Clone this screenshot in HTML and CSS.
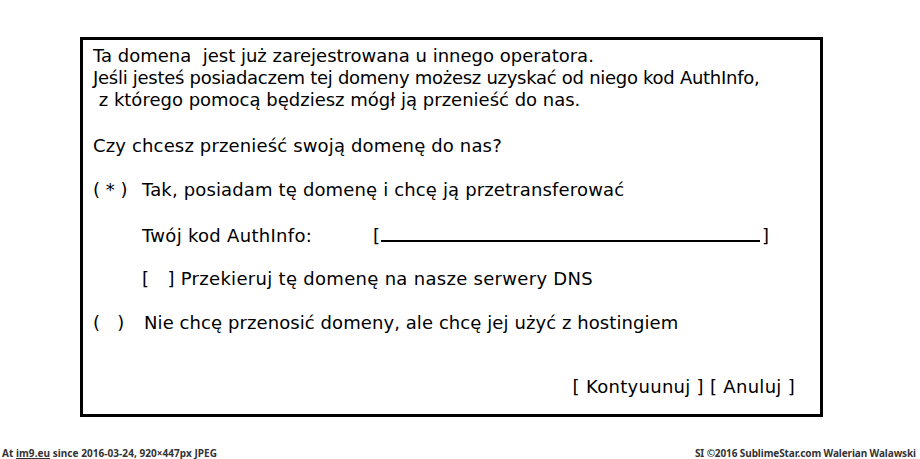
FILE: index.html
```html
<!DOCTYPE html>
<html lang="pl">
<head>
<meta charset="utf-8">
<title>Transfer domeny</title>
<link rel="stylesheet" href="styles.css">
</head>
<body>
<div class="page">
  <div class="dialog">
    <p class="intro">Ta domena&nbsp; jest już zarejestrowana u innego operatora.<br><span class="tight">Jeśli jesteś posiadaczem tej domeny możesz uzyskać od niego kod AuthInfo,</span><br>&nbsp;z którego pomocą będziesz mógł ją przenieść do nas.</p>
    <p class="question">Czy chcesz przenieść swoją domenę do nas?</p>
    <div class="row radio-row first">
      <span class="mark">( * )</span>
      <span class="label label-1">Tak, posiadam tę domenę i chcę ją przetransferować</span>
    </div>
    <div class="row sub-row code-row">
      <span class="code-label">Twój kod AuthInfo:</span>
      <span class="field">[<span class="field-line"></span>]</span>
    </div>
    <div class="row sub-row check-row">
      <span>[&nbsp;&nbsp;&nbsp;] Przekieruj tę domenę na nasze serwery DNS</span>
    </div>
    <div class="row radio-row second">
      <span class="mark">(&nbsp;&nbsp;&nbsp;)</span>
      <span class="label label-2">Nie chcę przenosić domeny, ale chcę jej użyć z hostingiem</span>
    </div>
    <div class="actions">[ Kontyuunuj ] [ Anuluj ]</div>
  </div>
</div>
<div class="footer">
  <span class="foot-left">At <span class="link">im9.eu</span> since 2016-03-24, 920×447px JPEG</span>
  <span class="foot-right">SI ©2016 SublimeStar.com Walerian Walawski</span>
</div>
</body>
</html>
```

FILE: styles.css
```css
html, body {
  margin: 0;
  padding: 0;
  background: #fff;
}
.page {
  height: 447px;
  padding-top: 37px;
  padding-left: 80px;
  box-sizing: border-box;
}
.dialog {
  box-sizing: border-box;
  width: 743px;
  height: 380px;
  border: 3px solid #000;
  padding: 5px 25px 0 10px;
  font-family: "DejaVu Sans", Verdana, sans-serif;
  font-size: 18px;
  line-height: 22px;
  color: #000;
  display: flex;
  flex-direction: column;
}
.intro {
  margin: 0;
}
.tight {
  letter-spacing: -0.28px;
}
.question {
  margin: 24px 0 0 0;
  letter-spacing: 0.15px;
}
.row {
  display: flex;
  align-items: baseline;
  white-space: nowrap;
}
.first {
  margin-top: 22px;
}
.mark {
  width: 49px;
  flex: none;
}
.label-1 {
  letter-spacing: 0.15px;
}
.label-2 {
  margin-left: 2px;
  letter-spacing: 0.08px;
}
.sub-row {
  padding-left: 49px;
}
.code-row {
  margin-top: 24px;
}
.code-label {
  width: 231px;
  flex: none;
  letter-spacing: 0.3px;
}
.field {
  display: inline-flex;
  align-items: baseline;
}
.field-line {
  display: inline-block;
  width: 379px;
  height: 2px;
  border-bottom: 2px solid #000;
  margin: 0 2px 0 1px;
}
.check-row {
  margin-top: 21px;
  letter-spacing: 0.3px;
}
.second {
  margin-top: 22px;
}
.actions {
  margin-top: 42px;
  text-align: right;
  letter-spacing: 0.3px;
}
.footer {
  height: 12px;
  display: flex;
  justify-content: space-between;
  padding: 0 4px 0 2px;
  font-family: "Noto Sans", "Open Sans", sans-serif;
  font-weight: bold;
  font-size: 10px;
  line-height: 12px;
  color: #333;
}
.foot-left {
  letter-spacing: 0.05px;
}
.foot-right {
  letter-spacing: -0.1px;
}
.link {
  text-decoration: underline;
}
```
